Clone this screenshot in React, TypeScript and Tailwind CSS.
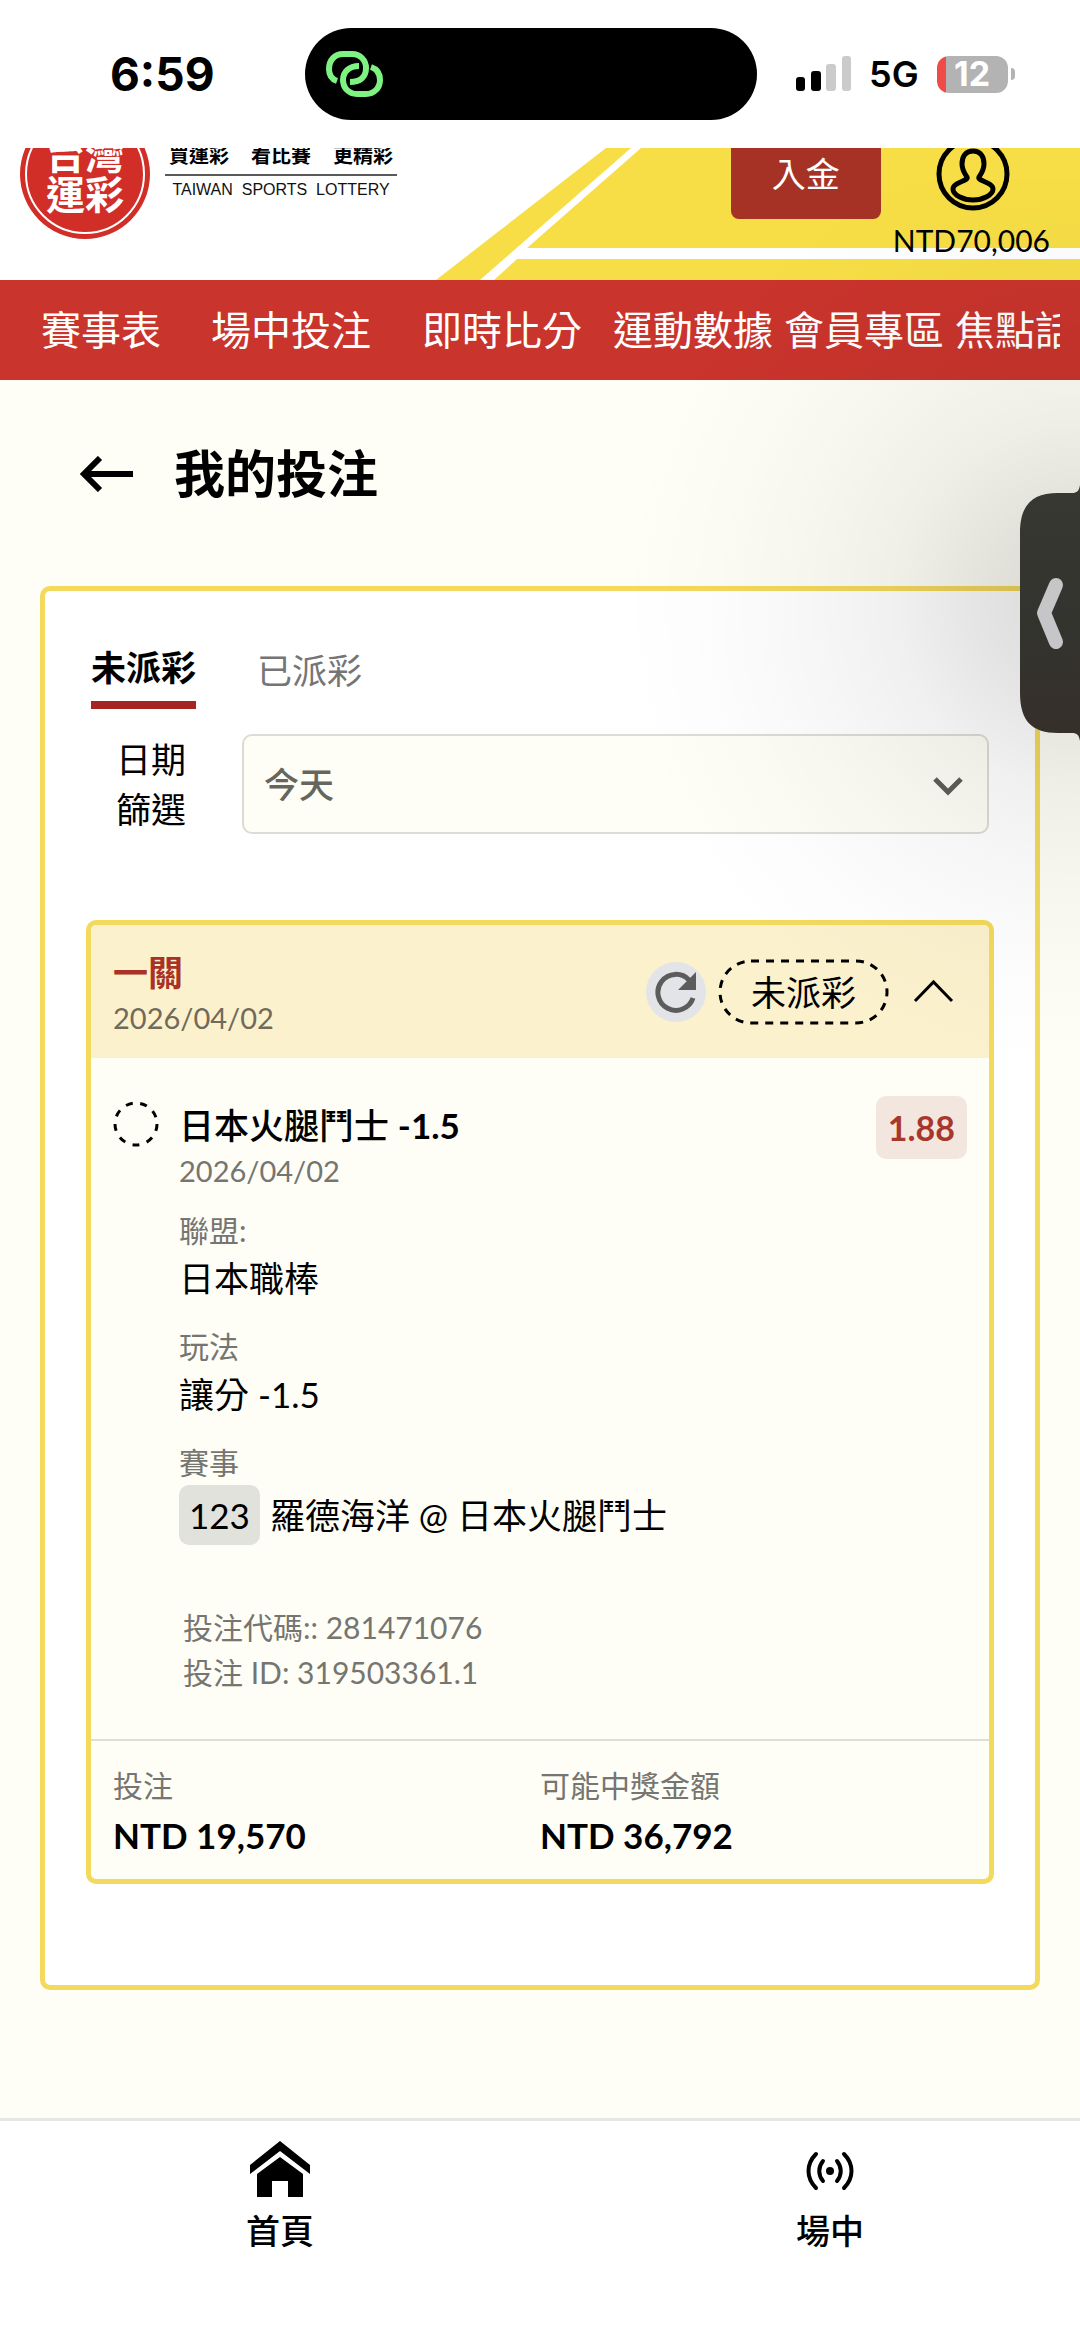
import { useState } from 'react';
import type { ReactNode } from 'react';

const NAV_ITEMS = [
  { label: '賽事表', gap: '' },
  { label: '場中投注', gap: 'ml-[50px]' },
  { label: '即時比分', gap: 'ml-[51px]' },
  { label: '運動數據', gap: 'ml-[31px]' },
  { label: '會員專區', gap: 'ml-[11px]' },
  { label: '焦點話題', gap: 'ml-[11px]' },
];

function StatusBar() {
  return (
    <div className="flex h-[148px] items-center bg-white font-['Inter',sans-serif] text-black">
      <div className="w-[305px] flex-none pl-[110px] text-[46px] leading-[50px] font-bold">6:59</div>
      <div className="flex h-[92px] w-[452px] flex-none items-center rounded-full bg-black pl-[20px]">
        <svg width="58" height="48" viewBox="0 0 58 48" fill="none" stroke="#7ff382" strokeWidth="6">
          <path d="M12 31C6 29 4 24 4 19C4 10 10 4 18 4H27C35 4 41 10 41 18C41 27 35 32 25 32" />
          <path d="M34 16C24 16 18 22 18 30C18 38 24 44 32 44H41C49 44 55 38 55 30C55 24 52 19 46 17" />
        </svg>
      </div>
      <div className="flex flex-1 items-center pl-[39px]">
        <svg width="56" height="36" viewBox="0 0 56 36">
          <rect x="0" y="21" width="9" height="14" rx="3" fill="#000" />
          <rect x="15" y="15" width="10" height="20" rx="3" fill="#000" />
          <rect x="30" y="8" width="10" height="27" rx="3" fill="#cbcbcb" />
          <rect x="46" y="0" width="9" height="35" rx="3" fill="#cbcbcb" />
        </svg>
        <span className="ml-[17px] text-[36px] leading-[40px] font-semibold">5G</span>
        <div className="ml-[18px] flex h-[37px] w-[71px] items-center justify-center rounded-xl bg-linear-to-r from-[#ee4b49] from-13% to-[#b3b3b3] to-13% text-[34px] leading-[36px] font-bold text-white">
          12
        </div>
        <div className="ml-[3px] h-[12px] w-[4px] rounded-r-full bg-[#b3b3b3]" />
      </div>
    </div>
  );
}

function LogoBadge() {
  return (
    <svg width="130" height="130" viewBox="0 0 130 130" role="img" aria-label="台灣運彩">
      <circle cx="65" cy="65" r="65" fill="#d22e28" />
      <circle cx="65" cy="65" r="59" fill="none" stroke="#fff" strokeWidth="2" />
      <g fill="#fff" fontFamily="'Noto Sans CJK TC', sans-serif" fontWeight="700" fontSize="39" textAnchor="middle">
        <text x="65" y="60">台灣</text>
        <text x="65" y="100">運彩</text>
      </g>
    </svg>
  );
}

function Header() {
  return (
    <header className="relative h-[132px] overflow-hidden bg-white">
      {/* stadium stripes */}
      <svg className="absolute top-0 right-0" width="644" height="132" viewBox="436 0 644 132" fill="#f7de46">
        <path d="M436 132L606 0H631L480 132Z" />
        <path d="M641 0H1080V100H527Z" />
        <path d="M517 111H1080V132H494Z" />
      </svg>

      <div className="relative flex h-full items-end">
        <a href="#home" className="mb-[41px] ml-[20px] flex-none">
          <LogoBadge />
        </a>
        <div className="mb-[80px] ml-[15px] flex w-[232px] flex-none flex-col items-center">
          <div className="flex w-full justify-between px-[4px] font-['Noto_Sans_CJK_TC',sans-serif] text-[20px] leading-[26px] font-bold">
            <span>買運彩</span>
            <span>看比賽</span>
            <span>更精彩</span>
          </div>
          <div className="mt-[6px] h-[2px] w-full bg-[#5a5a5a]" />
          <div className="mt-[4px] font-['Liberation_Sans',sans-serif] text-[16px] leading-[20px] whitespace-pre text-[#111]">
            TAIWAN  SPORTS  LOTTERY
          </div>
        </div>
        <button className="mb-[61px] ml-auto h-[100px] w-[150px] flex-none rounded-lg bg-[#a63226] pt-[10px] text-[34px] leading-[50px] text-white">
          入金
        </button>
        <a href="#account" className="mr-[30px] mb-[22px] ml-[12px] flex flex-none flex-col items-center text-[30px] leading-[36px]">
          <svg width="78" height="74" viewBox="0 0 78 74" fill="none" stroke="#000" strokeWidth="5">
            <circle cx="41" cy="37" r="34" />
            <path d="M41 14C33 14 30 20 30 27C30 33 33 37 35 40C37 44 21 45 21 52C21 58 31 63 41 63C51 63 61 58 61 52C61 45 45 44 47 40C49 37 52 33 52 27C52 20 49 14 41 14Z" />
          </svg>
          <span className="mt-[11px]">NTD70,006</span>
        </a>
      </div>
    </header>
  );
}

function Field({ label, children }: { label: string; children: ReactNode }) {
  return (
    <div>
      <dt className="text-[30px] leading-[45px] text-[#757571]">{label}</dt>
      <dd className="text-[35px] leading-[50px]">{children}</dd>
    </div>
  );
}

function BetCard() {
  const [expanded, setExpanded] = useState(true);

  return (
    <article className="overflow-hidden rounded-[10px] border-[5px] border-[#f3d95c] bg-[#fefef6]">
      <div className="flex items-start justify-between bg-[#fcf1cd] pt-[25px] pr-[35px] pb-[18px] pl-[22px]">
        <div>
          <h2 className="text-[35px] leading-[45px] font-bold text-[#a93226]">一關</h2>
          <p className="text-[29px] leading-[45px] text-[#716a5a]">2026/04/02</p>
        </div>
        <div className="mt-[9px] flex items-center">
          <button aria-label="重新整理" className="flex size-[60px] items-center justify-center rounded-full bg-[#e3e4e8]">
            <svg width="42" height="42" viewBox="0 0 42 42">
              <path d="M38 27A18 18 0 1 1 34 9" fill="none" stroke="#5c5c5c" strokeWidth="5" />
              <path d="M41 1V19H23Z" fill="#5c5c5c" />
            </svg>
          </button>
          <div className="relative ml-[12px] flex h-[66px] w-[171px] items-center justify-center text-[35px] leading-[50px]">
            <svg className="absolute inset-0" width="171" height="66" viewBox="0 0 171 66" fill="none">
              <rect x="2" y="2" width="167" height="62" rx="31" stroke="#000" strokeWidth="3" strokeDasharray="8 7" />
            </svg>
            未派彩
          </div>
          <button aria-label="展開或收合" aria-expanded={expanded} onClick={() => setExpanded(!expanded)} className="ml-[24px]">
            <svg width="41" height="26" viewBox="0 0 41 26" fill="none" stroke="#000" strokeWidth="3">
              <path d="M2 22L20.500 3L39 22" />
            </svg>
          </button>
        </div>
      </div>

      {expanded && (
        <div className="flex items-start px-[22px] pt-[38px] pb-[44px]">
          <svg className="mt-[5px] flex-none" width="46" height="46" viewBox="0 0 46 46" fill="none">
            <circle cx="23" cy="23" r="21" stroke="#000" strokeWidth="3" strokeDasharray="7 7.660" />
          </svg>
          <div className="mt-[7px] ml-[20px] min-w-0 flex-1">
            <h3 className="text-[35px] leading-[45px] font-medium">
              日本火腿鬥士 <span className="font-bold">-1.5</span>
            </h3>
            <p className="text-[29px] leading-[45px] text-[#757571]">2026/04/02</p>
            <dl className="mt-[15px] flex flex-col gap-[21px]">
              <Field label="聯盟:">日本職棒</Field>
              <Field label="玩法">讓分 -1.5</Field>
              <Field label="賽事">
                <span className="flex items-center">
                  <span className="mr-[10px] rounded-[10px] bg-[#e2e2dc] px-[10px] py-[5px]">123</span>
                  羅德海洋 @ 日本火腿鬥士
                </span>
              </Field>
            </dl>
            <div className="mt-[60px] pl-[4px] text-[30px] leading-[45px] text-[#757571]">
              <p>投注代碼:: 281471076</p>
              <p>投注 ID: 319503361.1</p>
            </div>
          </div>
          <div className="rounded-[10px] bg-[#f3e6df] px-[12px] py-[9px] text-[34px] leading-[45px] font-bold text-[#a8372b]">
            1.88
          </div>
        </div>
      )}

      <dl className="grid grid-cols-2 border-t-2 border-[#dfdfd8] px-[22px] pt-[22px] pb-[19px]">
        <div>
          <dt className="text-[30px] leading-[45px] text-[#757571]">投注</dt>
          <dd className="mt-[2px] text-[35px] leading-[50px] font-bold">NTD 19,570</dd>
        </div>
        <div>
          <dt className="text-[30px] leading-[45px] text-[#757571]">可能中獎金額</dt>
          <dd className="mt-[2px] text-[35px] leading-[50px] font-bold">NTD 36,792</dd>
        </div>
      </dl>
    </article>
  );
}

function BetPanel() {
  const [tab, setTab] = useState('open');
  const active = 'border-b-8 border-[#a52522] pb-[9px] text-[35px] leading-[50px] font-bold text-black';
  const idle = 'mt-[3px] text-[35px] leading-[50px] text-[#757575]';

  return (
    <section className="mx-[40px] rounded-[10px] border-[5px] border-[#f3d95c] bg-white px-[41px] pt-[51px] pb-[101px]">
      <div className="flex items-start gap-[61px] pl-[5px]">
        <button className={tab === 'open' ? active : idle} onClick={() => setTab('open')}>
          未派彩
        </button>
        <button className={tab === 'settled' ? active : idle} onClick={() => setTab('settled')}>
          已派彩
        </button>
      </div>

      <div className="mt-[25px] flex items-center pr-[5px]">
        <label htmlFor="date-filter" className="mr-[55px] ml-[30px] w-[71px] flex-none text-[35px] leading-[50px]">
          日期篩選
        </label>
        <div className="relative flex-1">
          <select
            id="date-filter"
            className="h-[100px] w-full appearance-none rounded-[10px] border-2 border-[#dcdcd6] bg-[#fefef6] px-[20px] text-[35px] font-medium text-[#666660]"
          >
            <option>今天</option>
            <option>昨天</option>
          </select>
          <svg className="pointer-events-none absolute top-[42px] right-[25px]" width="32" height="22" viewBox="0 0 32 22" fill="none" stroke="#5e5e58" strokeWidth="5">
            <path d="M3 3L16 16L29 3" />
          </svg>
        </div>
      </div>

      <div className="mt-[86px]">
        <BetCard />
      </div>
    </section>
  );
}

function SideHandle() {
  return (
    <>
      <div className="pointer-events-none absolute top-[180px] right-0 h-[960px] w-[460px] bg-[radial-gradient(460px_470px_at_100%_44%,rgba(0,0,0,0.15),rgba(0,0,0,0.11)_20%,rgba(0,0,0,0.06)_40%,rgba(0,0,0,0.03)_60%,rgba(0,0,0,0.01)_80%,transparent)]" />
      <button aria-label="展開側邊面板" className="absolute top-[485px] right-0">
        <svg width="60" height="256" viewBox="0 0 60 256" fill="none">
          <defs>
            <linearGradient id="handle" x1="0" y1="0" x2="0" y2="1">
              <stop offset="0" stopColor="#373830" />
              <stop offset="0.5" stopColor="#33342f" />
              <stop offset="1" stopColor="#362f2a" />
            </linearGradient>
          </defs>
          <path d="M60 0C59 6 57 8 52 8H38C12 8 0 20 0 48V208C0 236 12 248 38 248H52C57 248 59 250 60 256Z" fill="url(#handle)" />
          <path d="M36 100L24 128L36 157" stroke="#c6c5c7" strokeWidth="14" strokeLinecap="round" strokeLinejoin="round" />
        </svg>
      </button>
    </>
  );
}

function BottomNav() {
  return (
    <nav className="grid min-h-[223px] grid-cols-[14fr_13fr] items-start border-t-[3px] border-[#e6e6e4] bg-white text-[34px] leading-[50px] font-medium">
      <a href="#home" className="flex flex-col items-center pt-[20px]">
        <svg width="62" height="56" viewBox="0 0 62 56" fill="#000">
          <path d="M31 0L61 24V33L31 10L1 33V24Z" />
          <path d="M31 16L54 33V56H39V40H23V56H8V33Z" />
        </svg>
        <span className="mt-[9px]">首頁</span>
      </a>
      <a href="#live" className="flex flex-col items-center pt-[30px] pl-[20px]">
        <svg width="48" height="40" viewBox="0 0 48 40" fill="none" stroke="#000" strokeWidth="4" strokeLinecap="round">
          <circle cx="24" cy="20" r="4" fill="#000" stroke="none" />
          <path d="M17 10C12 16 12 24 17 30M31 10C36 16 36 24 31 30" />
          <path d="M10 3C0 13 0 27 10 37M38 3C48 13 48 27 38 37" />
        </svg>
        <span className="mt-[15px]">場中</span>
      </a>
    </nav>
  );
}

export default function App() {
  return (
    <div
      lang="zh-Hant"
      className="relative flex min-h-screen flex-col overflow-hidden bg-[#fefef6] font-['Lato','Noto_Sans_CJK_TC',sans-serif] text-black"
    >
      <StatusBar />
      <Header />
      <nav className="bg-[#c9342c] px-[20px]">
        <div className="flex h-[100px] items-center overflow-hidden pl-[21px] text-[40px] leading-[50px] whitespace-nowrap text-white">
          {NAV_ITEMS.map(({ label, gap }) => (
            <a key={label} href="#" className={`flex-none ${gap}`}>
              {label}
            </a>
          ))}
        </div>
      </nav>

      <main className="flex-1 pb-[128px]">
        <div className="flex items-center pt-[64px] pb-[82px] pl-[80px]">
          <button aria-label="返回">
            <svg width="54" height="36" viewBox="0 0 54 36" fill="none" stroke="#000" strokeWidth="6">
              <path d="M53 18H5M20 2L4 18L20 34" />
            </svg>
          </button>
          <h1 className="ml-[40px] text-[51px] leading-[60px] font-bold">我的投注</h1>
        </div>
        <BetPanel />
      </main>

      <BottomNav />
      <SideHandle />
    </div>
  );
}
